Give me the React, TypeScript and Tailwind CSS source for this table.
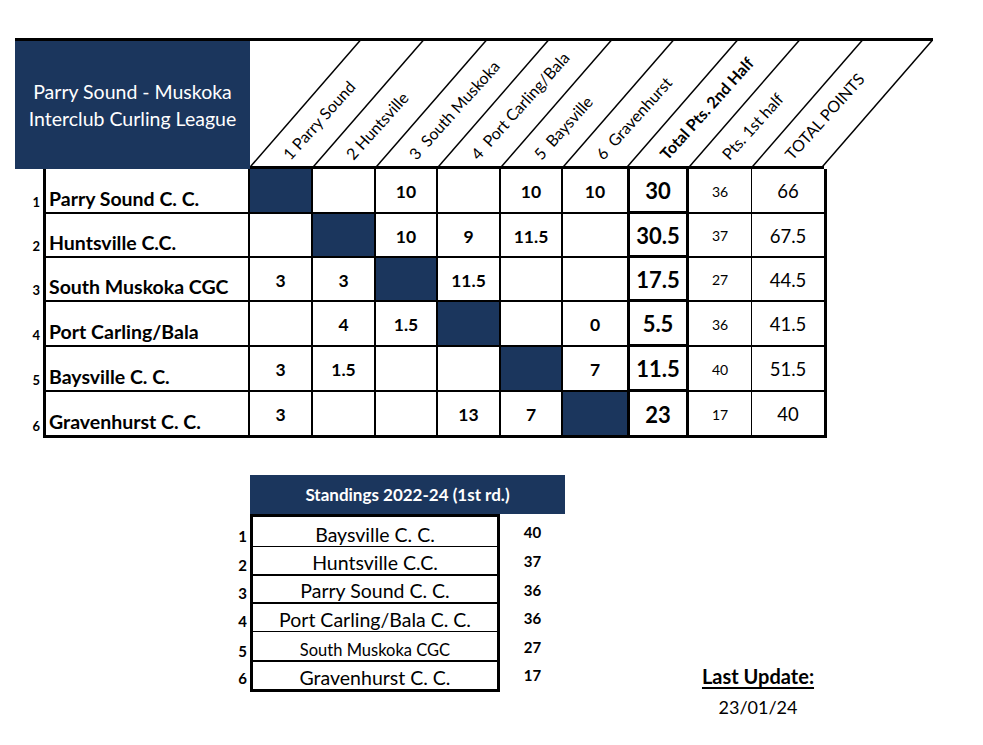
import React from "react";

type Cell = string | null;

const headers: { t: string; w: string; bold?: boolean; last?: boolean }[] = [
  { t: "1 Parry Sound", w: "w-[63px]" },
  { t: "2 Huntsville", w: "w-[63px]" },
  { t: "3  South Muskoka", w: "w-[62px]" },
  { t: "4  Port Carling/Bala", w: "w-[63px]" },
  { t: "5  Baysville", w: "w-[62px]" },
  { t: "6  Gravenhurst", w: "w-[64px]" },
  { t: "Total Pts. 2nd Half", w: "w-[62px]", bold: true },
  { t: "Pts. 1st half", w: "w-[63px]" },
  { t: "TOTAL POINTS", w: "w-[72px]", last: true },
];

const rows: { name: string; cells: Cell[]; total: string; first: string; points: string; h: string }[] = [
  { name: "Parry Sound C. C.", cells: [null, "", "10", "", "10", "10"], total: "30", first: "36", points: "66", h: "h-[45px]" },
  { name: "Huntsville C.C.", cells: ["", null, "10", "9", "11.5", ""], total: "30.5", first: "37", points: "67.5", h: "h-[44px]" },
  { name: "South Muskoka CGC", cells: ["3", "3", null, "11.5", "", ""], total: "17.5", first: "27", points: "44.5", h: "h-[44px]" },
  { name: "Port Carling/Bala", cells: ["", "4", "1.5", null, "", "0"], total: "5.5", first: "36", points: "41.5", h: "h-[45px]" },
  { name: "Baysville C. C.", cells: ["3", "1.5", "", "", null, "7"], total: "11.5", first: "40", points: "51.5", h: "h-[45px]" },
  { name: "Gravenhurst C. C.", cells: ["3", "", "", "13", "7", null], total: "23", first: "17", points: "40", h: "h-[46px]" },
];

const colW = ["w-[63px]", "w-[63px]", "w-[62px]", "w-[63px]", "w-[62px]", "w-[64px]"];

const standings: { name: string; pts: string; h: string; border: string; small?: boolean }[] = [
  { name: "Baysville C. C.", pts: "40", h: "h-[30px]", border: "border-b" },
  { name: "Huntsville C.C.", pts: "37", h: "h-[29px]", border: "border-b-2" },
  { name: "Parry Sound C. C.", pts: "36", h: "h-[28px]", border: "border-b-2" },
  { name: "Port Carling/Bala C. C.", pts: "36", h: "h-[28px]", border: "border-b" },
  { name: "South Muskoka CGC", pts: "27", h: "h-[30px]", border: "border-b-2", small: true },
  { name: "Gravenhurst C. C.", pts: "17", h: "h-[27px]", border: "" },
];

export default function App() {
  return (
    <div className="min-h-[745px] w-[983px] bg-white pt-[38px] pl-[15px] text-black font-['Lato',sans-serif]">
      {/* Header */}
      <div className="flex h-[131px] w-[918px] border-t-[3px] border-black">
        <div className="flex h-[128px] w-[235px] shrink-0 flex-col items-center justify-center bg-[#1b365d] text-[19.5px] leading-[27px] text-white">
          <div>Parry Sound - Muskoka</div>
          <div>Interclub Curling League</div>
        </div>
        <div className="flex h-[128px] border-b-[3px] border-black">
          {headers.map((h, i) => (
            <div key={i} className={`relative flex h-full shrink-0 items-end pb-[1px] pl-[36px] ${h.w}`}>
              <div
                className={`absolute inset-0 origin-bottom-left skew-x-[-41deg] border-l-2 border-black ${h.last ? "border-r-2" : ""}`}
              />
              <span
                className={`relative shrink-0 origin-left rotate-[-48deg] whitespace-pre text-[16px] leading-[16px] ${h.bold ? "font-bold" : ""}`}
              >
                {h.t}
              </span>
            </div>
          ))}
        </div>
      </div>

      {/* Body */}
      <div className="flex flex-col">
        {rows.map((r, ri) => {
          const last = ri === rows.length - 1;
          const bb = last ? "border-b-[3px]" : "border-b-2";
          return (
            <div key={ri} className={`flex ${r.h}`}>
              <div className="flex w-[28px] shrink-0 items-end justify-end pb-[5px] pr-[3px] text-[13px] font-bold leading-none">
                {ri + 1}
              </div>
              <div
                className={`flex w-[207px] shrink-0 items-end border-l-[3px] border-r-2 border-black pb-[4px] pl-[3px] text-[19.5px] font-bold leading-none ${bb}`}
              >
                {r.name}
              </div>
              {r.cells.map((c, ci) => (
                <div
                  key={ci}
                  className={`flex shrink-0 items-center justify-center border-black pt-[3px] text-[17.5px] font-bold leading-none ${colW[ci]} ${bb} ${ci < 5 ? "border-r-2" : ""} ${c === null ? "bg-[#1b365d]" : ""}`}
                >
                  {c}
                </div>
              ))}
              <div className="flex w-[62px] shrink-0 items-center justify-center border-x-[3px] border-b-[3px] border-black pt-[2px] text-[22px] font-bold leading-none">
                {r.total}
              </div>
              <div className={`flex w-[63px] shrink-0 items-center justify-center border-r border-black pt-[2px] text-[14px] leading-none ${bb}`}>
                {r.first}
              </div>
              <div className={`flex w-[75px] shrink-0 items-center justify-center border-r-[3px] border-black pt-[2px] text-[18.5px] leading-none ${bb}`}>
                {r.points}
              </div>
            </div>
          );
        })}
      </div>

      {/* Standings + last update */}
      <div className="mt-[37px] flex items-start">
        <div className="ml-[215px] flex flex-col">
          <div className="ml-[20px] flex h-[39px] w-[315px] items-center justify-center bg-[#1b365d] text-[17px] font-bold text-white">
            Standings 2022-24 (1st rd.)
          </div>
          <div className="flex">
            <div className="flex w-[20px] flex-col pt-[3px]">
              {standings.map((s, i) => (
                <div key={i} className={`flex items-end justify-end pb-[3px] pr-[3px] text-[15px] font-bold leading-none ${s.h}`}>
                  {i + 1}
                </div>
              ))}
            </div>
            <div className="flex w-[250px] flex-col border-[3px] border-black">
              {standings.map((s, i) => (
                <div
                  key={i}
                  className={`flex items-end justify-center border-black pb-[2px] leading-none ${s.h} ${s.border} ${s.small ? "text-[16.5px]" : "text-[19.5px]"}`}
                >
                  {s.name}
                </div>
              ))}
            </div>
            <div className="flex w-[65px] flex-col pt-[3px]">
              {standings.map((s, i) => (
                <div key={i} className={`flex items-center justify-center text-[15px] font-bold leading-none ${s.h}`}>
                  {s.pts}
                </div>
              ))}
            </div>
          </div>
        </div>
        <div className="ml-[133px] mt-[189px] flex w-[120px] flex-col items-center">
          <div className="whitespace-nowrap text-[20px] font-bold leading-[24px] underline underline-offset-[3px]">Last Update:</div>
          <div className="mt-[7px] text-[18px] leading-[24px]">23/01/24</div>
        </div>
      </div>
    </div>
  );
}
